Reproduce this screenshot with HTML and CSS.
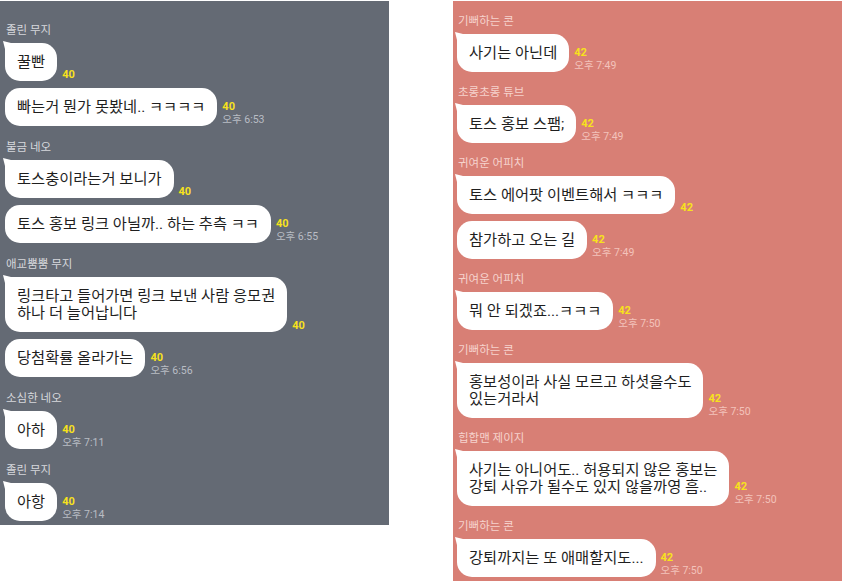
FILE: index.html
```html
<!DOCTYPE html>
<html lang="ko">
<head>
  <meta charset="UTF-8">
  <title>단톡방 캡처</title>
  <link rel="stylesheet" href="styles.css">
</head>
<body>
  <div class="chat chat-gray">
    <div class="group">
      <div class="name">졸린 무지</div>
      <div class="row first">
        <div class="bubble">꿀빤</div>
        <div class="meta"><span class="count">40</span></div>
      </div>
      <div class="row">
        <div class="bubble">빠는거 뭔가 못봤네.. ㅋㅋㅋㅋ</div>
        <div class="meta"><span class="count">40</span><span class="time">오후 6:53</span></div>
      </div>
    </div>

    <div class="group">
      <div class="name">불금 네오</div>
      <div class="row first">
        <div class="bubble">토스충이라는거 보니가</div>
        <div class="meta"><span class="count">40</span></div>
      </div>
      <div class="row">
        <div class="bubble">토스 홍보 링크 아닐까.. 하는 추측 ㅋㅋ</div>
        <div class="meta"><span class="count">40</span><span class="time">오후 6:55</span></div>
      </div>
    </div>

    <div class="group">
      <div class="name">애교뿜뿜 무지</div>
      <div class="row first">
        <div class="bubble">링크타고 들어가면 링크 보낸 사람 응모권<br>하나 더 늘어납니다</div>
        <div class="meta"><span class="count">40</span></div>
      </div>
      <div class="row">
        <div class="bubble">당첨확률 올라가는</div>
        <div class="meta"><span class="count">40</span><span class="time">오후 6:56</span></div>
      </div>
    </div>

    <div class="group">
      <div class="name">소심한 네오</div>
      <div class="row first">
        <div class="bubble">아하</div>
        <div class="meta"><span class="count">40</span><span class="time">오후 7:11</span></div>
      </div>
    </div>

    <div class="group">
      <div class="name">졸린 무지</div>
      <div class="row first">
        <div class="bubble">아항</div>
        <div class="meta"><span class="count">40</span><span class="time">오후 7:14</span></div>
      </div>
    </div>
  </div>

  <div class="chat chat-pink">
    <div class="group">
      <div class="name">기뻐하는 콘</div>
      <div class="row first">
        <div class="bubble">사기는 아닌데</div>
        <div class="meta"><span class="count">42</span><span class="time">오후 7:49</span></div>
      </div>
    </div>

    <div class="group">
      <div class="name">초롱초롱 튜브</div>
      <div class="row first">
        <div class="bubble">토스 홍보 스팸;</div>
        <div class="meta"><span class="count">42</span><span class="time">오후 7:49</span></div>
      </div>
    </div>

    <div class="group">
      <div class="name">귀여운 어피치</div>
      <div class="row first">
        <div class="bubble">토스 에어팟 이벤트해서 ㅋㅋㅋ</div>
        <div class="meta"><span class="count">42</span></div>
      </div>
      <div class="row">
        <div class="bubble">참가하고 오는 길</div>
        <div class="meta"><span class="count">42</span><span class="time">오후 7:49</span></div>
      </div>
    </div>

    <div class="group">
      <div class="name">귀여운 어피치</div>
      <div class="row first">
        <div class="bubble">뭐 안 되겠죠...ㅋㅋㅋ</div>
        <div class="meta"><span class="count">42</span><span class="time">오후 7:50</span></div>
      </div>
    </div>

    <div class="group">
      <div class="name">기뻐하는 콘</div>
      <div class="row first">
        <div class="bubble">홍보성이라 사실 모르고 하셧을수도<br>있는거라서</div>
        <div class="meta"><span class="count">42</span><span class="time">오후 7:50</span></div>
      </div>
    </div>

    <div class="group">
      <div class="name">힙합맨 제이지</div>
      <div class="row first">
        <div class="bubble">사기는 아니어도.. 허용되지 않은 홍보는<br>강퇴 사유가 될수도 있지 않을까영 흠..</div>
        <div class="meta"><span class="count">42</span><span class="time">오후 7:50</span></div>
      </div>
    </div>

    <div class="group">
      <div class="name">기뻐하는 콘</div>
      <div class="row first">
        <div class="bubble">강퇴까지는 또 애매할지도...</div>
        <div class="meta"><span class="count">42</span><span class="time">오후 7:50</span></div>
      </div>
    </div>
  </div>
</body>
</html>
```

FILE: styles.css
```css
* {
  margin: 0;
  padding: 0;
  box-sizing: border-box;
}

body {
  font-family: Roboto, "Noto Sans CJK KR", sans-serif;
  background: #ffffff;
  width: 843px;
  height: 581px;
  overflow: hidden;
  display: flex;
  align-items: flex-start;
  gap: 64px;
  padding-top: 1px;
}

.chat {
  width: 389px;
  display: flex;
  flex-direction: column;
  gap: 13px;
}

.chat-gray {
  height: 524px;
  background: #646a74;
  padding: 21px 0 0 5px;
  --name-color: #d6d8dc;
  --time-color: #b9bdc4;
}

.chat-pink {
  height: 580px;
  background: #d87f75;
  padding: 12px 0 0 4px;
  gap: 12px;
  --name-color: #f6d3cd;
  --time-color: #f3c3bb;
}

.group {
  display: flex;
  flex-direction: column;
  gap: 7px;
}

.name {
  font-size: 11.5px;
  line-height: 16px;
  color: var(--name-color);
  margin-bottom: -2px;
  padding-left: 1px;
}

.row {
  display: flex;
  align-items: flex-end;
}

.bubble {
  position: relative;
  background: #ffffff;
  color: #1f1f1f;
  font-size: 15.3px;
  line-height: 17px;
  padding: 10.5px 12px;
  border-radius: 15px;
  white-space: nowrap;
}

/* tail on the first bubble of a group */
.first .bubble {
  border-top-left-radius: 4px;
}

.first .bubble::before {
  content: "";
  position: absolute;
  left: -2px;
  top: -2px;
  width: 10px;
  height: 10px;
  background: #ffffff;
  clip-path: polygon(0 0, 100% 25%, 25% 100%);
}

.meta {
  display: flex;
  flex-direction: column;
  margin-left: 5px;
}

.count {
  font-size: 11px;
  line-height: 13px;
  font-weight: 700;
  color: #f7e21c;
}

.time {
  font-size: 10.5px;
  line-height: 13px;
  color: var(--time-color);
  white-space: nowrap;
}
```
